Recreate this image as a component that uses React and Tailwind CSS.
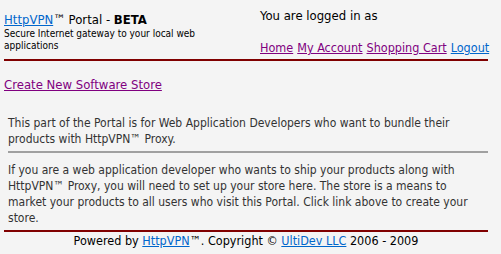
export default function App() {
  const font = "font-['DejaVu_Sans_Condensed','DejaVu_Sans',sans-serif]";
  return (
    <div className={`bg-[#f4f4f4] w-[501px] h-[254px] text-[13px] leading-[16px] text-black ${font}`}>
      <div className="px-[4px] w-[492px]">
        <div className="flex h-[58px]">
          <div className="w-[256px] shrink-0 pt-[12px]">
            <div className="whitespace-nowrap">
              <a href="#" className="text-[#0066cc] underline">HttpVPN</a>™ Portal - <b>BETA</b>
            </div>
            <div className="text-[10px] leading-[12px] w-[220px]">Secure Internet gateway to your local web applications</div>
          </div>
          <div className="pt-[8px]">
            <div className="whitespace-nowrap">You are logged in as</div>
            <div className="mt-[16px] flex gap-[4px] whitespace-nowrap text-[12.5px]">
              <a href="#" className="text-[#800080] underline">Home</a>
              <a href="#" className="text-[#800080] underline">My Account</a>
              <a href="#" className="text-[#800080] underline">Shopping Cart</a>
              <a href="#" className="text-[#0066cc] underline">Logout</a>
            </div>
          </div>
        </div>
        <div className="mt-[1px] h-[2px] bg-[#800000]"></div>
        <div className="mt-[16px]">
          <a href="#" className="text-[#800080] underline">Create New Software Store</a>
        </div>
        <div className="px-[4px] text-[#333333] text-[12px]">
          <p className="mt-[22px]">This part of the Portal is for Web Application Developers who want to bundle their products with HttpVPN™ Proxy.</p>
          <div className="mt-[4px] h-[2px] bg-[#a0a0a0] w-[480px]"></div>
          <p className="mt-[9px]">If you are a web application developer who wants to ship your products along with HttpVPN™ Proxy, you will need to set up your store here. The store is a means to market your products to all users who visit this Portal. Click link above to create your store.</p>
        </div>
        <div className="mt-[4px] h-[2px] bg-[#800000]"></div>
        <div className="text-center mt-[1px] text-[12.5px]">
          Powered by <a href="#" className="text-[#0066cc] underline">HttpVPN</a>™. Copyright © <a href="#" className="text-[#0066cc] underline">UltiDev LLC</a> 2006 - 2009
        </div>
      </div>
    </div>
  );
}
